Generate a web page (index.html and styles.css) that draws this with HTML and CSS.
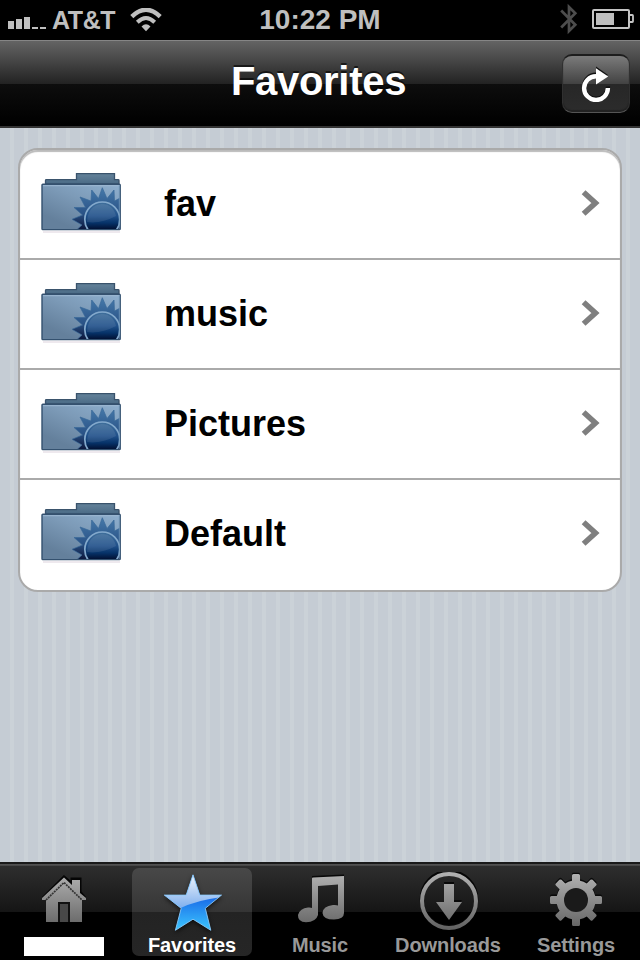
FILE: index.html
```html
<!DOCTYPE html>
<html lang="en">
<head>
    <meta charset="UTF-8">
    <meta name="viewport" content="width=device-width, initial-scale=1.0">
    <title>Favorites</title>
    <link rel="stylesheet" href="styles.css">
</head>
<body>
    <!-- Shared shapes and gradients -->
    <svg class="defs" width="0" height="0">
        <defs>
            <linearGradient id="folderFront" x1="1" y1="0" x2="0.3" y2="0.9">
                <stop offset="0" stop-color="#8fb0cf"/>
                <stop offset="0.5" stop-color="#7d9bb8"/>
                <stop offset="1" stop-color="#64809c"/>
            </linearGradient>
            <linearGradient id="folderBack" x1="0" y1="0" x2="0" y2="1">
                <stop offset="0" stop-color="#64829a"/>
                <stop offset="1" stop-color="#4a6a85"/>
            </linearGradient>
            <linearGradient id="rays" gradientUnits="userSpaceOnUse" x1="0" y1="17" x2="0" y2="59">
                <stop offset="0" stop-color="#4579aa"/>
                <stop offset="0.6" stop-color="#2a5387"/>
                <stop offset="1" stop-color="#0a1438"/>
            </linearGradient>
            <linearGradient id="sun" gradientUnits="userSpaceOnUse" x1="0" y1="31" x2="0" y2="59">
                <stop offset="0" stop-color="#41709c"/>
                <stop offset="0.5" stop-color="#20508a"/>
                <stop offset="0.75" stop-color="#063268"/>
                <stop offset="1" stop-color="#020c2b"/>
            </linearGradient>
            <linearGradient id="gray" gradientUnits="userSpaceOnUse" x1="0" y1="0" x2="0" y2="60">
                <stop offset="0" stop-color="#b4b4b4"/>
                <stop offset="1" stop-color="#5e5e5e"/>
            </linearGradient>
            <linearGradient id="starBottom" gradientUnits="userSpaceOnUse" x1="0" y1="22" x2="0" y2="58">
                <stop offset="0" stop-color="#1764e6"/>
                <stop offset="1" stop-color="#3cc8ff"/>
            </linearGradient>
            <linearGradient id="starTop" gradientUnits="userSpaceOnUse" x1="0" y1="2" x2="0" y2="35">
                <stop offset="0" stop-color="#f0f4fc"/>
                <stop offset="1" stop-color="#7fb0ee"/>
            </linearGradient>
            <clipPath id="frontClip"><rect x="2" y="14" width="78" height="44"/></clipPath>
            <clipPath id="starClip"><path d="M31 2 37.8 22.3H59.5L43.3 35.5 48.8 57.5 31 46.4 13.4 57.5 19.2 35.5 2.3 22.3H24.2Z"/></clipPath>
            <clipPath id="gearClip">
                <circle cx="31" cy="28" r="19.6"/>
                <rect x="27" y="2" width="8" height="52" rx="1.5"/>
                <rect x="27" y="2" width="8" height="52" rx="1.5" transform="rotate(45 31 28)"/>
                <rect x="27" y="2" width="8" height="52" rx="1.5" transform="rotate(90 31 28)"/>
                <rect x="27" y="2" width="8" height="52" rx="1.5" transform="rotate(135 31 28)"/>
            </clipPath>
        </defs>
        <symbol id="folder" viewBox="0 0 84 64">
            <path d="M3 60H80V62H3Z" fill="#eee9ee"/>
            <path d="M5.5 13V9.5Q5.5 8.7 6.3 8.7H36.5V2.7H74.5V8.7H78.2Q79 8.7 79 9.5V13Z" fill="url(#folderBack)" stroke="#3a536c" stroke-width="1.3"/>
            <rect x="2" y="13.3" width="78.2" height="45.3" rx="0.8" fill="url(#folderFront)" stroke="#34516f" stroke-width="1.4"/>
            <path d="M3 14.7H79.5" stroke="#9db8d2" stroke-width="1"/>
            <g clip-path="url(#frontClip)">
                <path d="M36 59.5 42 54 32 48.3 42.5 44 34 36.5 45.5 36.5 40 26 51 30 51.7 19 58.5 27.5 62.3 16.7 67 27.5 74 19 74.5 30 84 25 82 60Z" fill="url(#rays)" stroke="#3a6898" stroke-width="0.7"/>
                <circle cx="62.3" cy="48.5" r="17.5" fill="url(#sun)" stroke="#83a9cc" stroke-width="1.7"/>
                <path d="M47 51Q61 53 76 45Q73 33 62 33Q48 34 47 51Z" fill="#ffffff" opacity="0.09"/>
            </g>
            <path d="M79.3 14V58" stroke="#7399ba" stroke-width="0.8"/>
        </symbol>
        <symbol id="chevron" viewBox="0 0 19 26">
            <path d="M2.6 2.3 14.4 13 2.6 23.7" fill="none" stroke="#7f7f7f" stroke-width="5.6"/>
        </symbol>
    </svg>

    <div class="status-bar">
        <div class="carrier">
            <svg class="signal" width="38" height="12" viewBox="0 0 38 12">
                <path d="M0 4H6V12H0ZM8 2H14V12H8ZM16 0H22V12H16ZM24 10H30V12H24ZM32 10H38V12H32Z" fill="#bfbfbf"/>
            </svg>
            <span>AT&amp;T</span>
            <svg class="wifi" width="32" height="24" viewBox="0 0 32 24">
                <path d="M1.8 8.6Q16-5 30.2 8.6" fill="none" stroke="#bfbfbf" stroke-width="4.4"/>
                <path d="M7.3 14.2Q16 5.8 24.7 14.2" fill="none" stroke="#bfbfbf" stroke-width="4"/>
                <path d="M11.5 18.5Q16 13.8 20.5 18.5L16 23.3Z" fill="#bfbfbf"/>
            </svg>
        </div>
        <div class="time">10:22 PM</div>
        <div class="indicators">
            <svg class="bluetooth" width="18" height="32" viewBox="0 0 18 32">
                <path d="M1.2 7.5 15.3 21.7 9 28V4L15.3 10.3 1.2 24.5" fill="none" stroke="#4d4d4d" stroke-width="2.7"/>
            </svg>
            <svg class="battery" width="42" height="20" viewBox="0 0 42 20">
                <rect x="1" y="1" width="36" height="18" rx="1" fill="none" stroke="#c4c4c4" stroke-width="2"/>
                <path d="M38 6H40.3Q41 6 41 6.8V12.2Q41 13 40.3 13H38" fill="none" stroke="#c4c4c4" stroke-width="1.8"/>
                <rect x="4" y="4" width="18" height="12" fill="#bfbfbf"/>
            </svg>
        </div>
    </div>

    <div class="nav-bar">
        <h1>Favorites</h1>
        <button class="refresh" aria-label="Refresh">
            <svg width="30" height="36" viewBox="0 0 30 36">
                <g transform="translate(0 -1.6)" fill="#111111">
                    <path d="M15 10.2A12 12 0 1 0 27 22" fill="none" stroke="#111111" stroke-width="4.2"/>
                    <path d="M15 2 27 10.5 15 18Z"/>
                </g>
                <path d="M15 10.2A11.9 11.9 0 1 0 26.9 22" fill="none" stroke="#ffffff" stroke-width="4.4"/>
                <path d="M15 2.3 27.2 10.6 15 18.5Z" fill="#ffffff"/>
            </svg>
        </button>
    </div>

    <div class="content">
        <ul class="list">
            <li class="row">
                <svg class="folder"><use href="#folder"/></svg>
                <span class="name">fav</span>
                <svg class="chevron"><use href="#chevron"/></svg>
            </li>
            <li class="row">
                <svg class="folder"><use href="#folder"/></svg>
                <span class="name">music</span>
                <svg class="chevron"><use href="#chevron"/></svg>
            </li>
            <li class="row">
                <svg class="folder"><use href="#folder"/></svg>
                <span class="name">Pictures</span>
                <svg class="chevron"><use href="#chevron"/></svg>
            </li>
            <li class="row">
                <svg class="folder"><use href="#folder"/></svg>
                <span class="name">Default</span>
                <svg class="chevron"><use href="#chevron"/></svg>
            </li>
        </ul>
    </div>

    <div class="tab-bar">
        <div class="tab">
            <svg width="62" height="62" viewBox="-1 0 62 62">
                <path d="M9 26 30 5 38 12V7H46V20L51 26" fill="none" stroke="#050505" stroke-width="3"/>
                <path d="M8 28V26L30 5.5 38 13V8H46V21L52 26V28H48V50H36V32H24V50H12V28Z" fill="url(#gray)"/>
                <path d="M12 28 30 10.5 48 28" fill="none" stroke="#343434" stroke-width="1.7" stroke-dasharray="2 0.8"/>
                <path d="M25 50V31H35V50" fill="none" stroke="#111111" stroke-width="2"/>
                <rect x="26" y="32" width="8" height="18" fill="#484848"/>
            </svg>
            <span class="blank"></span>
        </div>
        <div class="tab active">
            <svg class="star" width="62" height="62" viewBox="-1 -0.8 62 62">
                <g clip-path="url(#starClip)">
                    <rect width="62" height="62" fill="url(#starBottom)"/>
                    <path d="M0 0H62V24Q35 27 17 36H0Z" fill="url(#starTop)"/>
                </g>
                <path d="M31 2 37.8 22.3H59.5L43.3 35.5 48.8 57.5 31 46.4 13.4 57.5 19.2 35.5 2.3 22.3H24.2Z" fill="none" stroke="#8bc9fa" stroke-width="0.9"/>
            </svg>
            <span>Favorites</span>
        </div>
        <div class="tab">
            <svg width="62" height="62" viewBox="0 0 62 62">
                <path d="M23 4 55 2.4V6H23Z" fill="#080808"/>
                <path d="M23 6.5Q23 5.5 24 5.4L55 4V41Q55 47 45 47.6Q34 47.6 33.5 41Q34 34 44 33Q47 32.6 49 33.6V12.5L29 14V43Q27 50 17 50.3Q8.6 50 9 43Q11 36 19 35.5Q22 35.3 23 36Z" fill="url(#gray)"/>
            </svg>
            <span>Music</span>
        </div>
        <div class="tab">
            <svg width="62" height="62" viewBox="0 0 62 62">
                <circle cx="32" cy="27" r="27.5" fill="none" stroke="#060606" stroke-width="3.6"/>
                <circle cx="32" cy="29" r="27" fill="none" stroke="url(#gray)" stroke-width="4"/>
                <path d="M27 10H37V28H45L32 46Z" fill="#080808"/>
                <path d="M27 12H37V30H45L32 48 19 30H27Z" fill="url(#gray)"/>
            </svg>
            <span>Downloads</span>
        </div>
        <div class="tab">
            <svg width="62" height="62" viewBox="0 0 62 62">
                <g transform="translate(0 -1.6)">
                    <rect width="62" height="62" fill="#090909" clip-path="url(#gearClip)"/>
                </g>
                <rect width="62" height="62" fill="url(#gray)" clip-path="url(#gearClip)"/>
                <circle cx="31" cy="28" r="12" fill="#1a1a1a"/>
            </svg>
            <span>Settings</span>
        </div>
    </div>
</body>
</html>
```
FILE: styles.css
```css
* {
    box-sizing: border-box;
}

body {
    display: flex;
    flex-direction: column;
    width: 640px;
    height: 960px;
    margin: 0;
    overflow: hidden;
    background: #000000;
    font-family: "Liberation Sans", Arial, sans-serif;
    font-weight: bold;
}

svg {
    display: block;
    flex: none;
}

.defs {
    position: absolute;
}

/* Status bar */
.status-bar {
    display: grid;
    grid-template-columns: 200px 240px 200px;
    height: 40px;
    color: #bfbfbf;
    line-height: 40px;
}

.carrier {
    display: flex;
    padding-left: 8px;
    font-size: 25px;
}

.carrier span {
    width: 64px;
    margin-left: 6px;
    letter-spacing: -0.4px;
}

.signal {
    margin-top: 17px;
}

.wifi {
    margin: 8px 0 0 14px;
}

.time {
    font-size: 28px;
    text-align: center;
}

.indicators {
    display: flex;
    justify-content: flex-end;
    padding-right: 6px;
}

.bluetooth {
    margin: 3px 14px 0 0;
}

.battery {
    margin-top: 9px;
}

/* Navigation bar */
.nav-bar {
    display: grid;
    grid-template-columns: 78px 1fr 78px;
    height: 88px;
    border-top: 1px solid #868686;
    border-bottom: 2px solid #333333;
    background: linear-gradient(#646464 0, #444444 21px, #222222 43px, #0d0d0d 43px, #000000 84px);
}

.nav-bar h1 {
    grid-column: 2;
    margin: 0;
    padding-right: 3px;
    color: #ffffff;
    font-size: 40px;
    letter-spacing: -0.3px;
    line-height: 80px;
    text-align: center;
    text-shadow: 0 -2px 0 rgba(0, 0, 0, 0.6);
}

.refresh {
    display: flex;
    width: 68px;
    height: 59px;
    margin: 13px 0 0 0;
    padding: 10px 0 0 18px;
    border: 1px solid #303030;
    border-top: 2px solid #1d1d1d;
    border-bottom: 1px solid #555555;
    border-radius: 10px;
    background: linear-gradient(#7b7b7b 0, #424242 28px, #272727 28px, #2c2c2c 100%);
    box-shadow: inset 0 -2px 1px #222222;
}

/* Folder list */
.content {
    flex: 1;
    padding: 20px 18px;
    background: repeating-linear-gradient(to right, #c5ccd4 0, #c5ccd4 10px, #cbd2d8 10px, #cbd2d8 14px);
}

.list {
    margin: 0;
    padding: 0;
    border: 2px solid #aaaaaa;
    border-radius: 20px;
    background: #ffffff;
    box-shadow: inset 0 2px 1px #bbbbbb;
    list-style: none;
}

.row {
    display: flex;
    height: 110px;
    padding: 0 20px;
    border-bottom: 2px solid #aaaaaa;
}

.row:last-child {
    border-bottom: none;
}

.folder {
    width: 84px;
    height: 64px;
    margin-top: 21px;
}

.name {
    flex: 1;
    margin-left: 40px;
    color: #000000;
    font-size: 36px;
    line-height: 108px;
}

.chevron {
    width: 19px;
    height: 26px;
    margin-top: 40px;
}

/* Tab bar */
.tab-bar {
    display: grid;
    grid-template-columns: repeat(5, 128px);
    height: 98px;
    padding-top: 2px;
    background: linear-gradient(#1a1a1a 2px, #555555 2px, #444444 4px, #2e2e2e 4px, #151515 50px, #000000 50px);
}

.tab {
    display: flex;
    flex-direction: column;
    align-items: center;
    width: 120px;
    height: 88px;
    margin: 4px;
    padding-top: 4px;
    border-radius: 7px;
    color: #999999;
    font-size: 20px;
    letter-spacing: -0.1px;
    line-height: 22px;
}

.tab.active {
    background: linear-gradient(#484848 0, #353535 44px, #232323 44px, #262626 100%);
    color: #ffffff;
}

.star {
    filter: drop-shadow(0 2px 2px rgba(0, 0, 0, 0.6));
}

.blank {
    width: 80px;
    height: 19px;
    margin-top: 3px;
    background: #ffffff;
}
```
